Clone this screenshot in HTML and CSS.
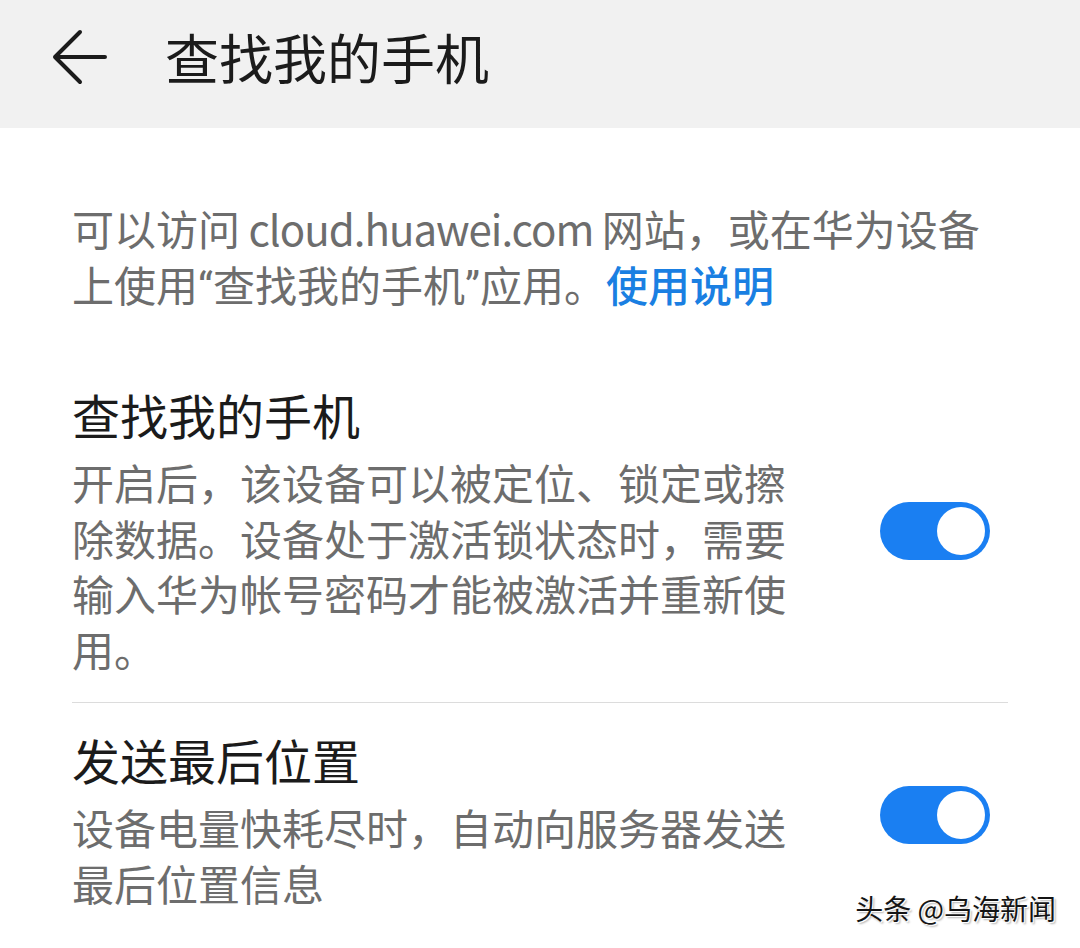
FILE: index.html
```html
<!DOCTYPE html>
<html lang="zh-CN">
<head>
<meta charset="utf-8">
<title>查找我的手机</title>
<link rel="stylesheet" href="styles.css">
</head>
<body>
<div class="screen">
  <header class="appbar">
    <svg class="back" viewBox="0 0 56 56" width="56" height="56" aria-hidden="true">
      <path d="M53 28 H3 M28 3 L3 28 L28 53" fill="none" stroke="#1b1b1b" stroke-width="4" stroke-linecap="round" stroke-linejoin="round"/>
    </svg>
    <h1 class="appbar-title">查找我的手机</h1>
  </header>

  <main class="content">
    <p class="intro">可以访问<span class="url"> cloud.huawei.com </span>网站，或在华为设备上使用<span class="q">“</span>查找我的手机<span class="q">”</span>应用。<a class="link" href="#">使用说明</a></p>

    <ul class="settings">
      <li class="setting setting-first">
        <div class="setting-text">
          <div class="setting-title">查找我的手机</div>
          <div class="setting-desc">开启后，该设备可以被定位、锁定或擦除数据。设备处于激活锁状态时，需要输入华为帐号密码才能被激活并重新使用。</div>
        </div>
        <span class="switch on"><span class="knob"></span></span>
      </li>
      <li class="setting setting-last">
        <div class="setting-text">
          <div class="setting-title">发送最后位置</div>
          <div class="setting-desc">设备电量快耗尽时，自动向服务器发送最后位置信息</div>
        </div>
        <span class="switch on"><span class="knob"></span></span>
      </li>
    </ul>
  </main>

  <div class="watermark">头条 @乌海新闻</div>
</div>
</body>
</html>
```

FILE: styles.css
```css
* {
  box-sizing: border-box;
}

html, body {
  margin: 0;
  padding: 0;
  background: #ffffff;
}

body {
  font-family: "Noto Sans CJK SC", "Noto Sans", sans-serif;
}

.screen {
  position: relative;
  width: 1080px;
  height: 948px;
  overflow: hidden;
  background: #ffffff;
}

.appbar {
  height: 128px;
  background: #f1f1f1;
  display: flex;
  align-items: center;
  padding: 0 0 14px 52px;
}

.back {
  display: block;
  flex: none;
}

.appbar-title {
  margin: 0 0 0 57px;
  font-size: 54px;
  line-height: 1;
  font-weight: 400;
  color: #1b1b1b;
}

.content {
  padding: 72px 72px 0 72px;
}

.intro {
  margin: 0;
  font-size: 42px;
  line-height: 56px;
  color: #6d6d6d;
}

.url {
  letter-spacing: -1px;
}

.q {
  font-family: Roboto, "Noto Sans", sans-serif;
}

.link {
  color: #1a7fe2;
  text-decoration: none;
  font-weight: 500;
}

.settings {
  list-style: none;
  margin: 58px 0 0 0;
  padding: 0;
}

.setting {
  display: flex;
  align-items: center;
  justify-content: space-between;
}

.setting-first {
  padding-bottom: 26px;
  border-bottom: 1px solid #dcdcdc;
}

.setting-first .switch {
  margin-top: 12px;
}

.setting-last {
  padding-top: 16px;
}

.setting-text {
  width: 720px;
}

.setting-title {
  font-size: 48px;
  line-height: 80px;
  color: #1b1b1b;
}

.setting-desc {
  font-size: 42px;
  line-height: 55.6px;
  color: #6d6d6d;
}

.switch {
  position: relative;
  flex: none;
  width: 110px;
  height: 58px;
  border-radius: 29px;
  background: #cfcfcf;
  margin-right: 18px;
}

.switch.on {
  background: #1a7ff2;
}

.knob {
  position: absolute;
  top: 5px;
  right: 5px;
  width: 48px;
  height: 48px;
  border-radius: 50%;
  background: #ffffff;
}

.watermark {
  position: absolute;
  right: 24px;
  bottom: 22px;
  font-size: 28px;
  line-height: 36px;
  color: #141414;
  text-shadow: 1px 1px 0 #ffffff, 2px 2px 2px rgba(0, 0, 0, 0.3);
}
```
